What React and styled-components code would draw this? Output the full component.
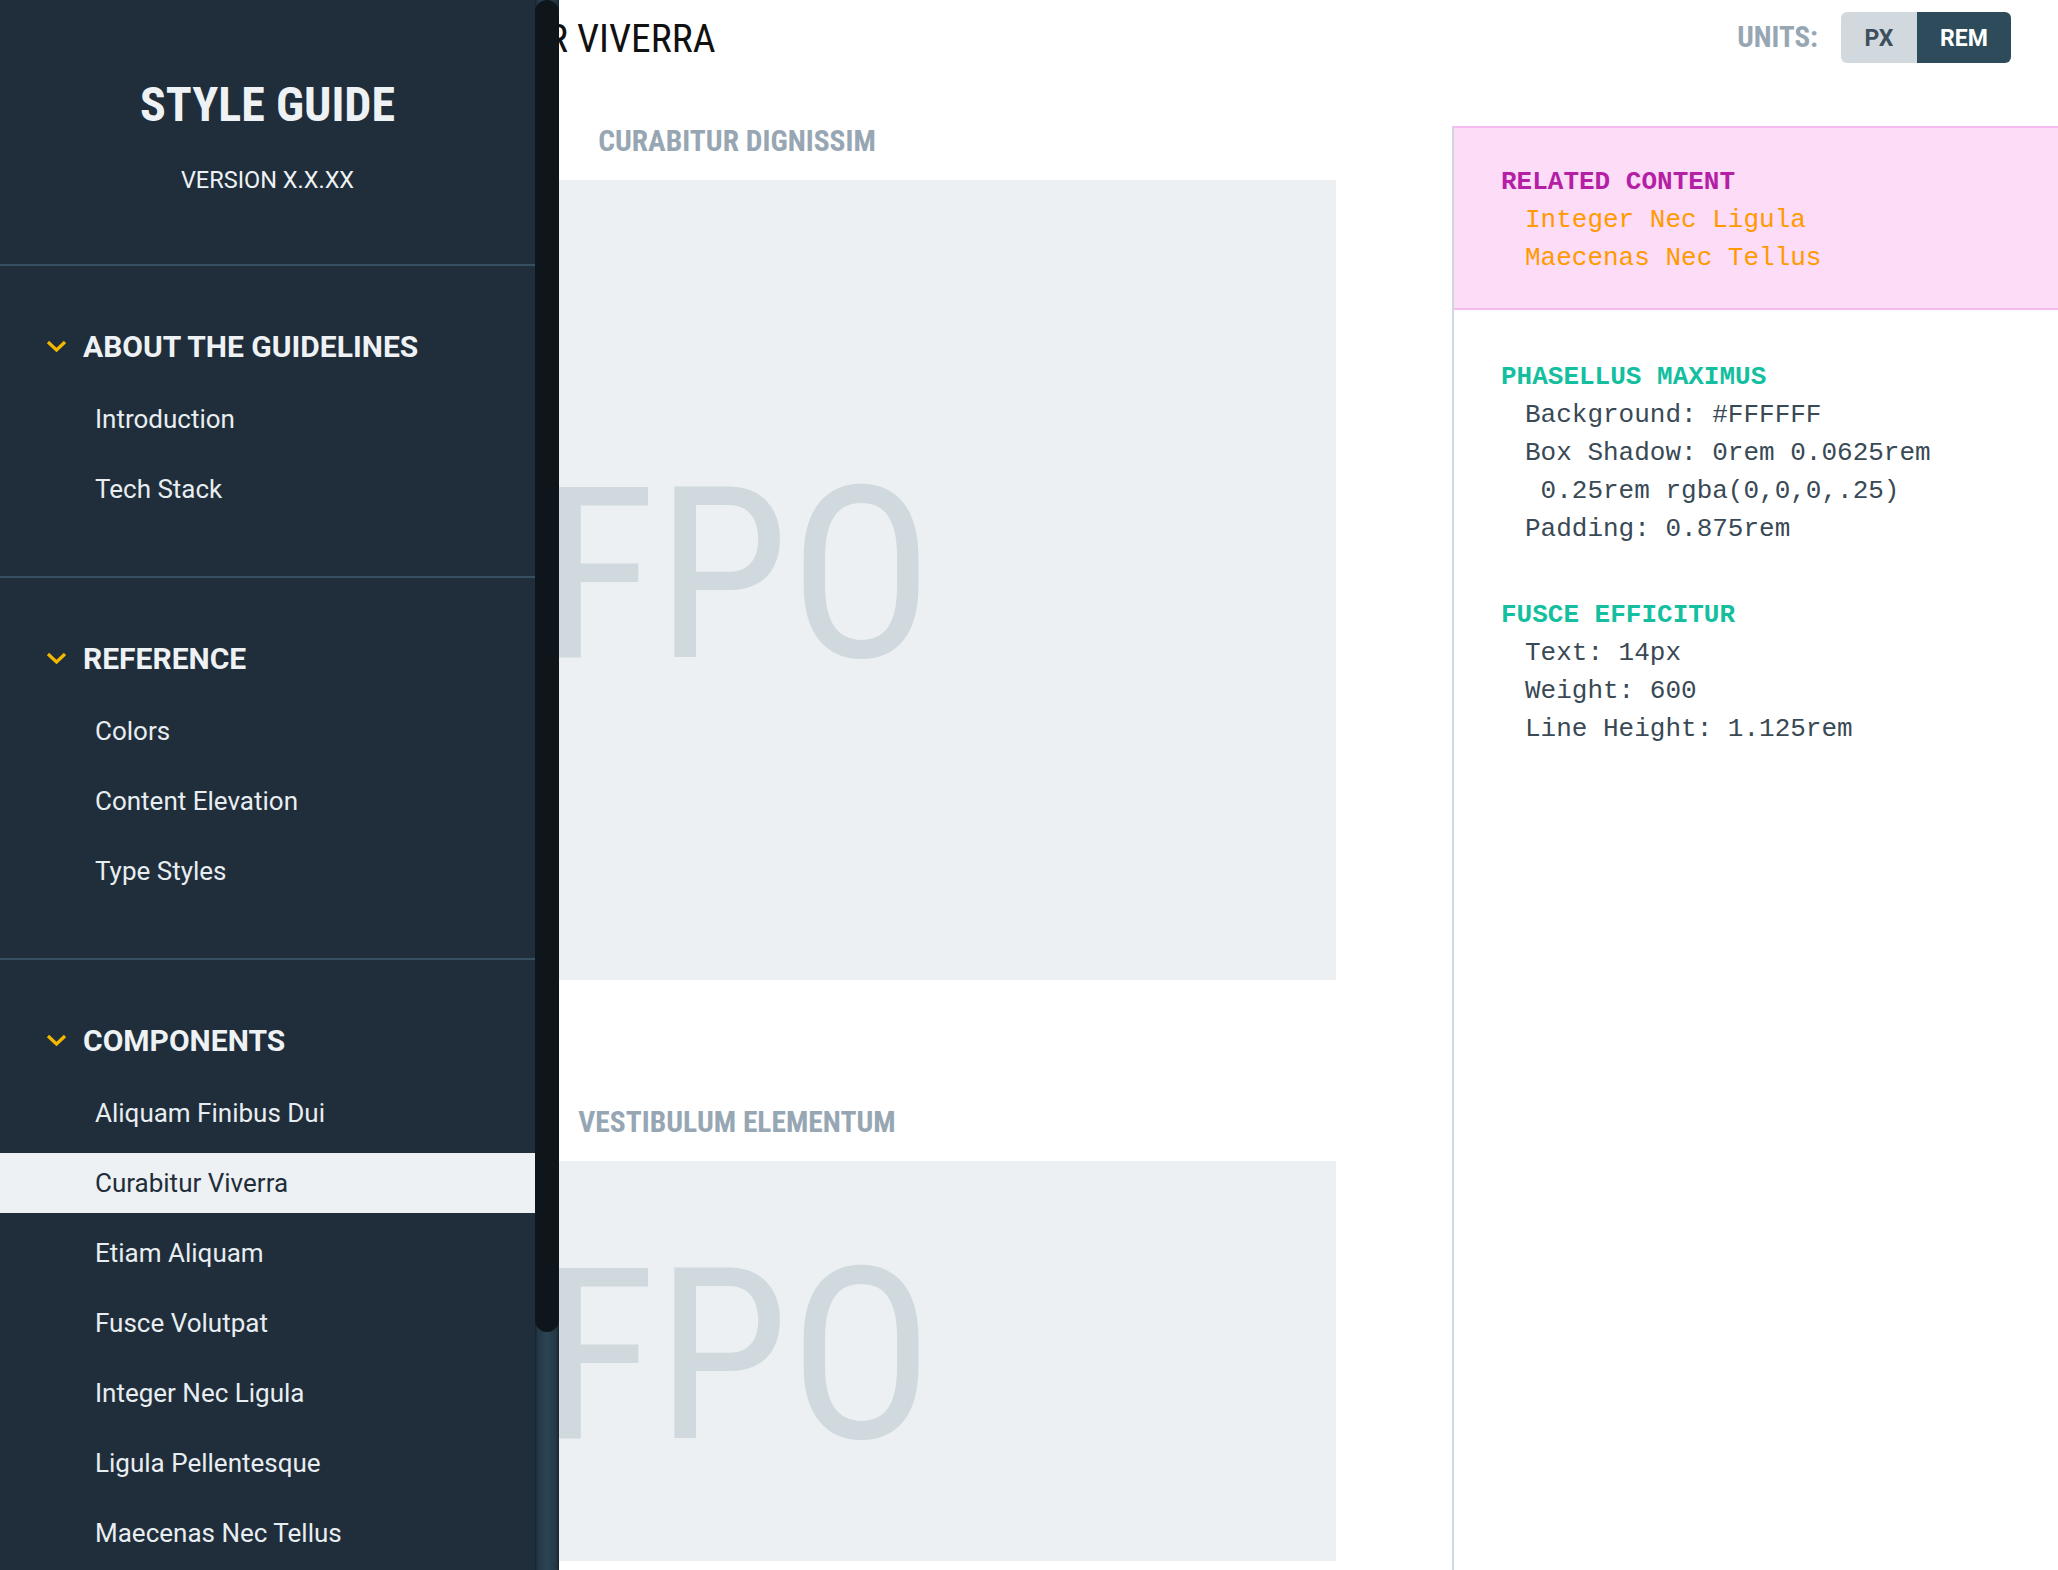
import React from "react";
import styled, { createGlobalStyle } from "styled-components";

const COND = `"Roboto Condensed", Roboto, "Liberation Sans", sans-serif`;
const SANS = `Roboto, "Liberation Sans", sans-serif`;
const MONO = `"Liberation Mono", "DejaVu Sans Mono", monospace`;

const GlobalStyle = createGlobalStyle`
  html, body { margin: 0; padding: 0; background: #ffffff; }
  body { font-family: ${SANS}; overflow: hidden; }
  *, *::before, *::after { box-sizing: border-box; }
`;

const Page = styled.div`
  position: relative;
  width: 2058px;
  height: 1570px;
  overflow: hidden;
  display: flex;
  flex-direction: column;
  background: #ffffff;
`;

/* ---------- Header ---------- */
const Header = styled.header`
  height: 126px;
  flex: none;
  display: flex;
  align-items: flex-start;
  justify-content: space-between;
  padding: 13px 47px 0 385px;
`;

const PageTitle = styled.h1`
  margin: 0;
  font-family: ${COND};
  font-weight: 400;
  font-size: 39.5px;
  line-height: 52px;
  color: #111111;
  white-space: nowrap;
`;

const Units = styled.div`
  display: flex;
  align-items: center;
  gap: 23px;
  margin-top: -1px;
`;

const UnitsLabel = styled.span`
  font-family: ${COND};
  font-weight: 700;
  font-size: 29px;
  line-height: 51px;
  color: #97a6b3;
`;

const Toggle = styled.div`
  display: flex;
  height: 51px;
  border-radius: 6px;
  overflow: hidden;
`;

const ToggleButton = styled.button`
  border: 0;
  margin: 0;
  padding: 2px 0 0;
  width: ${(p) => p.$w}px;
  height: 51px;
  font-family: ${SANS};
  font-weight: 700;
  font-size: 23px;
  background: ${(p) => (p.$active ? "#2e4b5b" : "#d1d9df")};
  color: ${(p) => (p.$active ? "#ffffff" : "#3d4f5c")};
`;

/* ---------- Body ---------- */
const Body = styled.div`
  flex: 1;
  display: flex;
  min-height: 0;
`;

const Content = styled.main`
  width: 1452px;
  flex: none;
  padding: 0 116px 0 138px;
  display: flex;
  flex-direction: column;
`;

const Section = styled.section`
  display: flex;
  flex-direction: column;
  margin-top: ${(p) => p.$top}px;
`;

const SectionLabel = styled.h2`
  margin: 0 0 24px;
  text-align: center;
  font-family: ${COND};
  font-weight: 700;
  font-size: 29.5px;
  line-height: 30px;
  color: #97a6b3;
`;

const Placeholder = styled.div`
  height: ${(p) => p.$h}px;
  background: #edf0f2;
  display: flex;
  align-items: center;
  justify-content: center;
  padding-bottom: 10px;
  font-family: ${COND};
  font-weight: 400;
  font-size: 240px;
  line-height: 1;
  color: #d0d9de;
  overflow: hidden;
`;

/* ---------- Right panel ---------- */
const Aside = styled.aside`
  flex: 1;
  border-left: 2px solid #cfd8de;
  display: flex;
  flex-direction: column;
  font-family: ${MONO};
  font-size: 26px;
  line-height: 38px;
`;

const Related = styled.div`
  background: #fddcf8;
  border-top: 2px solid #f6bbee;
  border-bottom: 2px solid #f6bbee;
  padding: 35px 0 31px 47px;
`;

const Group = styled.div`
  padding-left: 47px;
  margin-top: 48px;
`;

const GroupTitle = styled.div`
  font-weight: 700;
  color: ${(p) => p.$color};
  white-space: pre;
`;

const GroupLine = styled.div`
  padding-left: 24px;
  color: ${(p) => p.$color || "#394955"};
  white-space: pre;
`;

/* ---------- Sidebar ---------- */
const Sidebar = styled.div`
  position: absolute;
  left: 0;
  top: 0;
  width: 559px;
  height: 1570px;
  display: flex;
  z-index: 2;
`;

const Nav = styled.nav`
  width: 535px;
  height: 100%;
  overflow: hidden;
  background: #1f2e3a;
  display: flex;
  flex-direction: column;
`;

const Brand = styled.div`
  flex: none;
  height: 266px;
  border-bottom: 2px solid #365061;
  padding-top: 76px;
  display: flex;
  flex-direction: column;
  align-items: center;
`;

const BrandTitle = styled.div`
  font-family: ${COND};
  font-weight: 700;
  font-size: 48px;
  line-height: 58px;
  color: #eef2f5;
`;

const BrandVersion = styled.div`
  margin-top: 31px;
  font-family: ${SANS};
  font-weight: 400;
  font-size: 23.5px;
  line-height: 30px;
  color: #eef2f5;
`;

const NavSection = styled.div`
  flex: none;
  padding: 60px 0 57px;
  border-bottom: 2px solid #365061;
`;

const NavHeading = styled.div`
  display: flex;
  align-items: center;
  gap: 16px;
  padding-left: 46px;
  height: 40px;
  font-family: ${SANS};
  font-weight: 700;
  font-size: 30px;
  color: #eef2f5;
  margin-bottom: 23px;
`;

const NavList = styled.ul`
  list-style: none;
  margin: 0;
  padding: 0;
  display: flex;
  flex-direction: column;
  gap: 10px;
`;

const NavItem = styled.li`
  height: 60px;
  line-height: 60px;
  padding-left: 95px;
  font-family: ${SANS};
  font-size: 26px;
  color: ${(p) => (p.$active ? "#1f2e3a" : "#e8edf1")};
  background: ${(p) => (p.$active ? "#edf1f4" : "transparent")};
`;

const Track = styled.div`
  width: 24px;
  height: 100%;
  background: linear-gradient(
    to right,
    #17242d 0,
    #243846 3px,
    #2c4454 50%,
    #243846 calc(100% - 3px),
    #17242d 100%
  );
`;

const Thumb = styled.div`
  width: 24px;
  height: 1332px;
  border-radius: 12px;
  background: #0e161b;
`;

const Chevron = () => (
  <svg width="21" height="14" viewBox="0 0 21 14" fill="none">
    <polyline
      points="2,3 10.5,11 19,3"
      stroke="#f5b800"
      strokeWidth="3.2"
      strokeLinecap="butt"
      strokeLinejoin="miter"
    />
  </svg>
);

const navSections = [
  { title: "ABOUT THE GUIDELINES", items: ["Introduction", "Tech Stack"] },
  { title: "REFERENCE", items: ["Colors", "Content Elevation", "Type Styles"] },
  {
    title: "COMPONENTS",
    items: [
      "Aliquam Finibus Dui",
      "Curabitur Viverra",
      "Etiam Aliquam",
      "Fusce Volutpat",
      "Integer Nec Ligula",
      "Ligula Pellentesque",
      "Maecenas Nec Tellus",
    ],
  },
];

const specGroups = [
  {
    title: "PHASELLUS MAXIMUS",
    lines: [
      "Background: #FFFFFF",
      "Box Shadow: 0rem 0.0625rem",
      " 0.25rem rgba(0,0,0,.25)",
      "Padding: 0.875rem",
    ],
  },
  {
    title: "FUSCE EFFICITUR",
    lines: ["Text: 14px", "Weight: 600", "Line Height: 1.125rem"],
  },
];

export default function App() {
  return (
    <>
      <GlobalStyle />
      <Page>
        <Header>
          <PageTitle>CURABITUR VIVERRA</PageTitle>
          <Units>
            <UnitsLabel>UNITS:</UnitsLabel>
            <Toggle>
              <ToggleButton $w={76}>PX</ToggleButton>
              <ToggleButton $w={94} $active>
                REM
              </ToggleButton>
            </Toggle>
          </Units>
        </Header>
        <Body>
          <Content>
            <Section $top={0}>
              <SectionLabel>CURABITUR DIGNISSIM</SectionLabel>
              <Placeholder $h={800}>FPO</Placeholder>
            </Section>
            <Section $top={127}>
              <SectionLabel>VESTIBULUM ELEMENTUM</SectionLabel>
              <Placeholder $h={400}>FPO</Placeholder>
            </Section>
          </Content>
          <Aside>
            <Related>
              <GroupTitle $color="#b41fa5">RELATED CONTENT</GroupTitle>
              <GroupLine $color="#ff9a00">Integer Nec Ligula</GroupLine>
              <GroupLine $color="#ff9a00">Maecenas Nec Tellus</GroupLine>
            </Related>
            {specGroups.map((g) => (
              <Group key={g.title}>
                <GroupTitle $color="#14bf9f">{g.title}</GroupTitle>
                {g.lines.map((l) => (
                  <GroupLine key={l}>{l}</GroupLine>
                ))}
              </Group>
            ))}
          </Aside>
        </Body>
        <Sidebar>
          <Nav>
            <Brand>
              <BrandTitle>STYLE GUIDE</BrandTitle>
              <BrandVersion>VERSION X.X.XX</BrandVersion>
            </Brand>
            {navSections.map((s) => (
              <NavSection key={s.title}>
                <NavHeading>
                  <Chevron />
                  <span>{s.title}</span>
                </NavHeading>
                <NavList>
                  {s.items.map((it) => (
                    <NavItem key={it} $active={it === "Curabitur Viverra"}>
                      {it}
                    </NavItem>
                  ))}
                </NavList>
              </NavSection>
            ))}
          </Nav>
          <Track>
            <Thumb />
          </Track>
        </Sidebar>
      </Page>
    </>
  );
}
